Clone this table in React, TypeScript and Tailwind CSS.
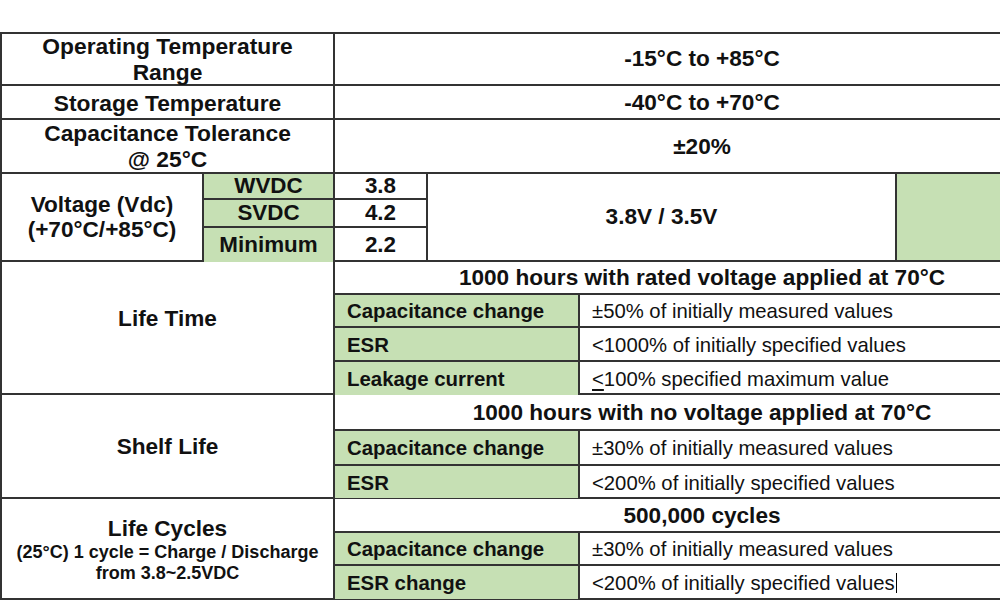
import React from "react";

const font = { fontFamily: '"Liberation Sans", Arial, sans-serif' };

function SubRow({
  label,
  value,
  h,
  last,
}: {
  label: string;
  value: React.ReactNode;
  h?: string;
  last?: boolean;
}) {
  return (
    <div
      className={`flex ${h ?? "flex-1"} ${last ? "" : "border-b-2 border-[#333]"}`}
    >
      <div className="w-[245px] shrink-0 bg-[#c6e0b4] border-r-2 border-[#333] flex items-center pl-[12px] pt-[2px] text-[20.4px] font-bold">
        {label}
      </div>
      <div className="flex-1 flex items-center pl-[12px] pt-[2px] text-[20.3px]">{value}</div>
    </div>
  );
}

export default function App() {
  return (
    <div
      className="w-[1000px] h-[613px] overflow-hidden bg-white pt-[32px] text-[#111]"
      style={font}
    >
      <div className="w-[1069px] border-t-2 border-l-2 border-[#333]">
        {/* Operating Temperature */}
        <div className="flex h-[52px] border-b-2 border-[#333]">
          <div className="w-[333px] shrink-0 border-r-2 border-[#333] flex items-center justify-center text-center text-[22.8px] font-bold leading-[26px]">
            Operating Temperature
            <br />
            Range
          </div>
          <div className="flex-1 flex items-center justify-center text-[22.6px] font-bold">
            -15°C to +85°C
          </div>
        </div>
        {/* Storage */}
        <div className="flex h-[34px] border-b-2 border-[#333]">
          <div className="w-[333px] shrink-0 border-r-2 border-[#333] flex items-center justify-center text-[22.8px] font-bold pt-[2px]">
            Storage Temperature
          </div>
          <div className="flex-1 flex items-center justify-center text-[22.6px] font-bold pt-[2px]">
            -40°C to +70°C
          </div>
        </div>
        {/* Capacitance Tolerance */}
        <div className="flex h-[54px] border-b-2 border-[#333]">
          <div className="w-[333px] shrink-0 border-r-2 border-[#333] flex items-center justify-center text-center text-[22.8px] font-bold leading-[26px]">
            Capacitance Tolerance
            <br />
            @ 25°C
          </div>
          <div className="flex-1 flex items-center justify-center text-[22.6px] font-bold pt-[2px]">
            ±20%
          </div>
        </div>
        {/* Voltage */}
        <div className="flex h-[88px] border-b-2 border-[#333]">
          <div className="w-[202px] shrink-0 border-r-2 border-[#333] flex items-center justify-center text-center text-[22.6px] font-bold leading-[25px]">
            Voltage (Vdc)
            <br />
            (+70°C/+85°C)
          </div>
          <div className="w-[224px] shrink-0 flex flex-col border-r-2 border-[#333]">
            {[
              ["WVDC", "3.8", "h-[26px]"],
              ["SVDC", "4.2", "h-[28px]"],
              ["Minimum", "2.2", "flex-1"],
            ].map(([l, v, h], i) => (
              <div
                key={l}
                className={`flex ${h} ${i < 2 ? "border-b-2 border-[#333]" : ""}`}
              >
                <div className="w-[131px] shrink-0 bg-[#c6e0b4] border-r-2 border-[#333] flex items-center justify-center text-[22.4px] font-bold">
                  {l}
                </div>
                <div className="flex-1 flex items-center justify-center text-[22.4px] font-bold">
                  {v}
                </div>
              </div>
            ))}
          </div>
          <div className="w-[469px] shrink-0 border-r-2 border-[#333] flex items-center justify-center text-[22.6px] font-bold">
            3.8V / 3.5V
          </div>
          <div className="flex-1 bg-[#c6e0b4]" />
        </div>
        {/* Life Time */}
        <div className="flex h-[133px] border-b-2 border-[#333]">
          <div className="w-[333px] shrink-0 border-r-2 border-[#333] flex items-center justify-center text-[22.6px] font-bold pb-[18px]">
            Life Time
          </div>
          <div className="flex-1 flex flex-col">
            <div className="h-[33px] border-b-2 border-[#333] flex items-center justify-center text-[22.6px] font-bold pt-[1px]">
              1000 hours with rated voltage applied at 70°C
            </div>
            <SubRow
              h="h-[33px]"
              label="Capacitance change"
              value="±50% of initially measured values"
            />
            <SubRow
              h="h-[34px]"
              label="ESR"
              value="<1000% of initially specified values"
            />
            <SubRow
              last
              label="Leakage current"
              value={
                <span>
                  <span className="underline underline-offset-[3px]">&lt;</span>100%
                  specified maximum value
                </span>
              }
            />
          </div>
        </div>
        {/* Shelf Life */}
        <div className="flex h-[104px] border-b-2 border-[#333]">
          <div className="w-[333px] shrink-0 border-r-2 border-[#333] flex items-center justify-center text-[22.6px] font-bold pt-[2px]">
            Shelf Life
          </div>
          <div className="flex-1 flex flex-col">
            <div className="h-[36px] border-b-2 border-[#333] flex items-center justify-center text-[22.6px] font-bold pt-[1px]">
              1000 hours with no voltage applied at 70°C
            </div>
            <SubRow
              h="h-[35px]"
              label="Capacitance change"
              value="±30% of initially measured values"
            />
            <SubRow
              last
              label="ESR"
              value="<200% of initially specified values"
            />
          </div>
        </div>
        {/* Life Cycles */}
        <div className="flex h-[101px] border-b-2 border-[#333]">
          <div className="w-[333px] shrink-0 border-r-2 border-[#333] flex flex-col items-center justify-center text-center font-bold pt-[3px]">
            <div className="text-[22.6px] leading-[26px]">Life Cycles</div>
            <div className="text-[18px] leading-[21px]">
              (25°C) 1 cycle = Charge / Discharge
            </div>
            <div className="text-[18px] leading-[21px]">from 3.8~2.5VDC</div>
          </div>
          <div className="flex-1 flex flex-col">
            <div className="h-[34px] border-b-2 border-[#333] flex items-center justify-center text-[22.6px] font-bold pt-[1px]">
              500,000 cycles
            </div>
            <SubRow
              h="h-[33px]"
              label="Capacitance change"
              value="±30% of initially measured values"
            />
            <SubRow
              last
              label="ESR change"
              value={
                <span className="flex items-center">
                  &lt;200% of initially specified values
                  <span className="inline-block w-[1px] h-[20px] bg-black ml-[1px]" />
                </span>
              }
            />
          </div>
        </div>
      </div>
    </div>
  );
}
